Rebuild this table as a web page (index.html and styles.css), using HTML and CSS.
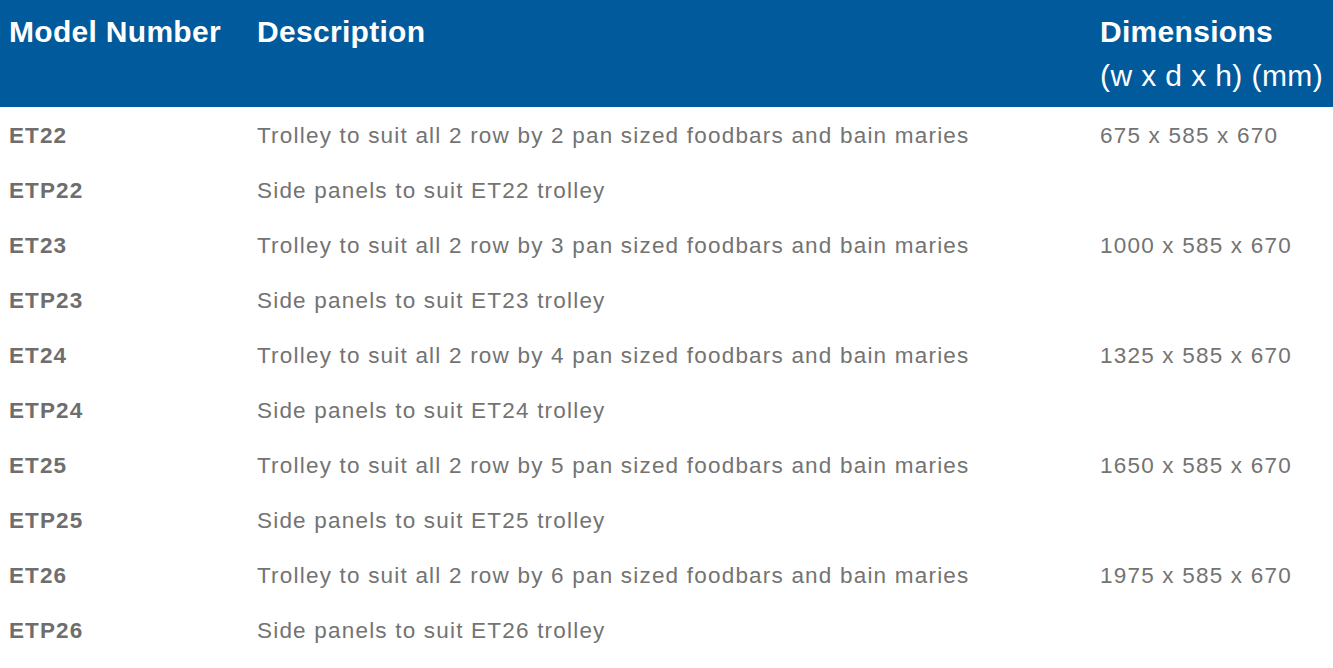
FILE: index.html
```html
<!DOCTYPE html>
<html lang="en">
<head>
<meta charset="utf-8">
<title>Trolleys</title>
<link rel="stylesheet" href="styles.css">
</head>
<body>
<table class="spec">
  <colgroup>
    <col class="c-model">
    <col class="c-desc">
    <col class="c-dim">
  </colgroup>
  <thead>
    <tr>
      <th>Model Number</th>
      <th>Description</th>
      <th>Dimensions<br><span class="unit">(w x d x h) (mm)</span></th>
    </tr>
  </thead>
  <tbody>
    <tr><td class="model">ET22</td><td>Trolley to suit all 2 row by 2 pan sized foodbars and bain maries</td><td>675 x 585 x 670</td></tr>
    <tr><td class="model">ETP22</td><td>Side panels to suit ET22 trolley</td><td></td></tr>
    <tr><td class="model">ET23</td><td>Trolley to suit all 2 row by 3 pan sized foodbars and bain maries</td><td>1000 x 585 x 670</td></tr>
    <tr><td class="model">ETP23</td><td>Side panels to suit ET23 trolley</td><td></td></tr>
    <tr><td class="model">ET24</td><td>Trolley to suit all 2 row by 4 pan sized foodbars and bain maries</td><td>1325 x 585 x 670</td></tr>
    <tr><td class="model">ETP24</td><td>Side panels to suit ET24 trolley</td><td></td></tr>
    <tr><td class="model">ET25</td><td>Trolley to suit all 2 row by 5 pan sized foodbars and bain maries</td><td>1650 x 585 x 670</td></tr>
    <tr><td class="model">ETP25</td><td>Side panels to suit ET25 trolley</td><td></td></tr>
    <tr><td class="model">ET26</td><td>Trolley to suit all 2 row by 6 pan sized foodbars and bain maries</td><td>1975 x 585 x 670</td></tr>
    <tr><td class="model">ETP26</td><td>Side panels to suit ET26 trolley</td><td></td></tr>
  </tbody>
</table>
</body>
</html>
```
FILE: styles.css
```css
html, body {
  margin: 0;
  padding: 0;
  background: #ffffff;
}
body {
  font-family: "Liberation Sans", Arial, sans-serif;
  overflow: hidden;
}
.spec {
  width: 100%;
  border-collapse: collapse;
  table-layout: fixed;
}
.c-model { width: 248px; }
.c-desc { width: 843px; }
.spec thead tr {
  background: #005a9c;
}
.spec th {
  color: #ffffff;
  font-size: 30px;
  font-weight: bold;
  letter-spacing: 0.3px;
  line-height: 43.5px;
  text-align: left;
  vertical-align: top;
  padding: 10px 9px 10px 9px;
  white-space: nowrap;
}
.spec th .unit {
  font-weight: normal;
  letter-spacing: 0.4px;
}
.spec td {
  color: #737373;
  font-size: 22.5px;
  letter-spacing: 1.2px;
  line-height: 33px;
  padding: 12px 9px 10px 9px;
  vertical-align: top;
  white-space: nowrap;
}
.spec td.model {
  font-weight: bold;
  color: #6e6e6e;
  letter-spacing: 1.1px;
}
```
